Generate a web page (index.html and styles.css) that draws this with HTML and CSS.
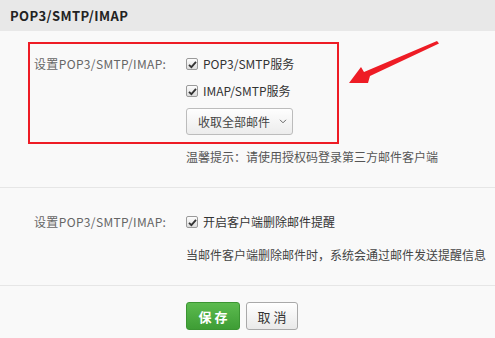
FILE: index.html
```html
<!DOCTYPE html>
<html lang="zh-CN">
<head>
<meta charset="utf-8">
<title>POP3/SMTP/IMAP</title>
<link rel="stylesheet" href="styles.css">
</head>
<body>
<div class="page">
  <div class="header">POP3/SMTP/IMAP</div>
  <div class="section first">
    <div class="form-row">
      <div class="label">设置POP3/SMTP/IMAP:</div>
      <div class="field">
        <div class="check-line"><span class="cb"><svg width="9" height="9" viewBox="0 0 9 9"><path d="M1 4.8 L3.4 7.2 L8 1.8" fill="none" stroke="#333" stroke-width="1.8"/></svg></span>POP3/SMTP服务</div>
        <div class="check-line"><span class="cb"><svg width="9" height="9" viewBox="0 0 9 9"><path d="M1 4.8 L3.4 7.2 L8 1.8" fill="none" stroke="#333" stroke-width="1.8"/></svg></span>IMAP/SMTP服务</div>
        <div class="dropdown">收取全部邮件<svg class="chev" width="8" height="5" viewBox="0 0 8 5"><path d="M1 0.8 L4 3.8 L7 0.8" fill="none" stroke="#666" stroke-width="1"/></svg></div>
        <div class="tip">温馨提示：请使用授权码登录第三方邮件客户端</div>
      </div>
    </div>
    <div class="redbox"></div>
    <svg class="arrow" width="102" height="50" viewBox="0 0 102 50"><path d="M97 1 L99 3.5 L30 36 L28 43 L9 43 L21 27 L24 32 Z" fill="#ee1c25"/></svg>
  </div>
  <div class="section second">
    <div class="form-row">
      <div class="label">设置POP3/SMTP/IMAP:</div>
      <div class="field">
        <div class="check-line"><span class="cb"><svg width="9" height="9" viewBox="0 0 9 9"><path d="M1 4.8 L3.4 7.2 L8 1.8" fill="none" stroke="#333" stroke-width="1.8"/></svg></span>开启客户端删除邮件提醒</div>
        <div class="desc">当邮件客户端删除邮件时，系统会通过邮件发送提醒信息</div>
      </div>
    </div>
  </div>
  <div class="actions">
    <button class="btn save">保存</button>
    <button class="btn cancel">取消</button>
  </div>
</div>
</body>
</html>
```
FILE: styles.css
```css
* { box-sizing: border-box; }
html, body { margin: 0; padding: 0; }
body {
  background: #f9f9f9;
  font-family: "Noto Sans CJK SC", "Noto Sans", sans-serif;
  font-size: 12px;
  color: #333;
  width: 495px;
  height: 338px;
  overflow: hidden;
}
.header {
  height: 31px;
  background: #e8e8e8;
  font-weight: bold;
  font-size: 13px;
  letter-spacing: 0.4px;
  line-height: 31px;
  padding-left: 10px;
  color: #222;
}
.section {
  position: relative;
  border-bottom: 1px solid #e6e6e6;
}
.section.first { padding: 23px 0 20px 34px; }
.section.second { padding: 24px 0 20px 34px; }
.form-row {
  display: grid;
  grid-template-columns: 152px 1fr;
}
.label {
  color: #666;
  line-height: 20px;
  letter-spacing: 0.35px;
}
.field {
  display: flex;
  flex-direction: column;
  align-items: flex-start;
}
.check-line {
  display: flex;
  align-items: center;
  line-height: 20px;
  color: #333;
}
.check-line + .check-line { margin-top: 7px; }
.cb {
  width: 12px;
  height: 12px;
  border: 1px solid #9a9a9a;
  border-radius: 2px;
  background: linear-gradient(#fdfdfd, #dcdcdc);
  display: inline-flex;
  align-items: center;
  justify-content: center;
  margin-right: 5px;
}
.dropdown {
  margin-top: 7px;
  width: 107px;
  height: 27px;
  border: 1px solid #bcbcbc;
  border-radius: 3px;
  background: linear-gradient(#fefefe, #ececec);
  display: flex;
  align-items: center;
  padding-left: 11px;
  color: #444;
}
.chev { margin-left: 9px; }
.tip {
  margin-top: 12px;
  line-height: 20px;
  color: #555;
}
.desc {
  margin-top: 13px;
  line-height: 20px;
  color: #444;
}
.redbox {
  position: absolute;
  left: 28px;
  top: 11px;
  width: 311px;
  height: 102px;
  border: 2px solid #ee1c25;
}
.arrow {
  position: absolute;
  left: 340px;
  top: 9px;
}
.actions {
  padding: 16px 0 0 186px;
  display: flex;
  gap: 6px;
}
.btn {
  height: 28px;
  border-radius: 3px;
  font-family: "Noto Sans CJK SC", sans-serif;
  font-size: 13px;
  letter-spacing: 3px;
  padding: 0 0 0 3px;
  cursor: pointer;
}
.save {
  width: 54px;
  color: #fff;
  border: 1px solid #3b9532;
  background: linear-gradient(#5cbb4f, #3e9d35);
  font-weight: bold;
}
.cancel {
  width: 52px;
  color: #333;
  border: 1px solid #a9a9a9;
  background: linear-gradient(#ffffff, #e9e9e9);
}
```
